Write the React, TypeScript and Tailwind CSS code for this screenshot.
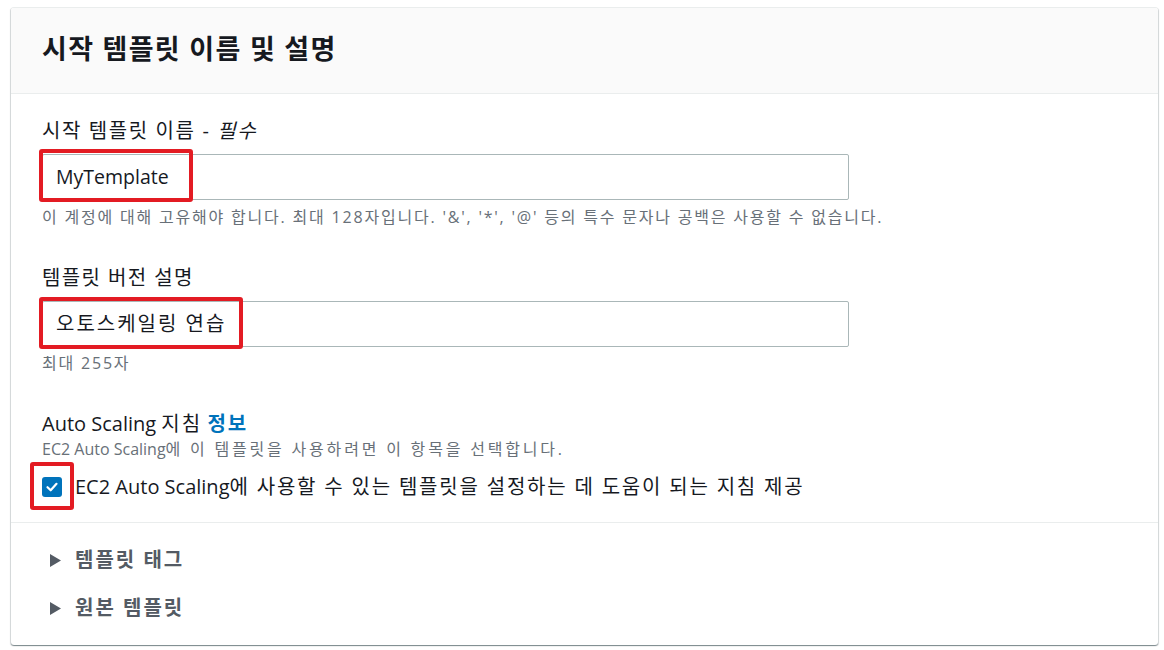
import React from "react";

const font = { fontFamily: '"Open Sans", "Noto Sans CJK KR", sans-serif' };

function RedBox({ className }: { className: string }) {
  return <div className={"pointer-events-none absolute rounded-[3px] border-[4px] border-[#e31b23] " + className} />;
}

export default function App() {
  return (
    <div className="h-[650px] w-[1164px] bg-white pt-[7px] pl-[11px]" style={font}>
      <div className="w-[1147px] h-[638px] rounded-[3px] bg-white shadow-[0_1px_1px_0_rgba(0,28,36,0.35),1px_1px_1px_0_rgba(0,28,36,0.15),-1px_1px_1px_0_rgba(0,28,36,0.15)] border-t border-[#eaeded] flex flex-col">
        <div className="h-[86px] bg-[#fafafa] border-b border-[#eaeded] flex items-center pl-[31px] pb-[5px] rounded-t-[3px]">
          <h2 className="text-[27px] font-bold text-[#16191f] leading-none tracking-[1.3px]">시작 템플릿 이름 및 설명</h2>
        </div>
        <div className="pl-[31px] pt-[24px] pb-[17px] border-b border-[#eaeded]">
          <div className="text-[20px] text-[#16191f] leading-[26px] tracking-[1.6px]">
            시작 템플릿 이름 - <i>필수</i>
          </div>
          <div className="relative mt-[10px] w-[807px]">
            <div className="h-[46px] border border-[#aab7b8] rounded-[2px] flex items-center pl-[13px] text-[19.5px] text-[#16191f]">
              MyTemplate
            </div>
            <RedBox className="left-[-3px] top-[-5px] w-[154px] h-[53px]" />
          </div>
          <div className="mt-[7px] text-[16px] text-[#687078] leading-[20px] tracking-[1.8px]">
            이 계정에 대해 고유해야 합니다. 최대 128자입니다. '&amp;', '*', '@' 등의 특수 문자나 공백은 사용할 수 없습니다.
          </div>

          <div className="mt-[38px] text-[20px] text-[#16191f] leading-[26px] tracking-[1.4px]">템플릿 버전 설명</div>
          <div className="relative mt-[10px] w-[807px]">
            <div className="h-[46px] border border-[#aab7b8] rounded-[2px] flex items-center pl-[13px] text-[20px] tracking-[2px] text-[#16191f]">
              오토스케일링 연습
            </div>
            <RedBox className="left-[-3px] top-[-4px] w-[204px] h-[52px]" />
          </div>
          <div className="mt-[6px] text-[16px] text-[#687078] leading-[20px] tracking-[1.8px]">최대 255자</div>

          <div className="mt-[38px] text-[20px] text-[#16191f] leading-[26px]">
            Auto Scaling <span className="tracking-[2px]">지침</span>{" "}
            <span className="tracking-[2px] font-bold text-[#0073bb]">정보</span>
          </div>
          <div className="mt-[2px] text-[16px] text-[#687078] leading-[20px]">
            EC2 Auto Scaling<span className="tracking-[2.8px]">에 이 템플릿을 사용하려면 이 항목을 선택합니다.</span>
          </div>
          <div className="relative mt-[10px] flex items-center gap-[13px] h-[36px]">
            <div className="w-[20px] h-[20px] rounded-[3px] bg-[#0073bb] flex items-center justify-center">
              <svg width="14" height="14" viewBox="0 0 14 14" fill="none">
                <path d="M2.5 7.2 L5.7 10.3 L11.5 3.8" stroke="white" strokeWidth="2.2" strokeLinecap="round" strokeLinejoin="round" />
              </svg>
            </div>
            <span className="text-[20px] text-[#16191f]">
              EC2 Auto Scaling<span className="tracking-[1.8px]">에 사용할 수 있는 템플릿을 설정하는 데 도움이 되는 지침 제공</span>
            </span>
            <RedBox className="left-[-12px] top-[-7px] w-[44px] h-[48px]" />
          </div>
        </div>
        <div className="pl-[39px] pt-[24px] flex flex-col gap-[22px]">
          {["템플릿 태그", "원본 템플릿"].map((t) => (
            <div key={t} className="flex items-center gap-[14px] h-[26px]">
              <svg width="11" height="13" viewBox="0 0 11 13">
                <path d="M0 0 L11 6.5 L0 13 Z" fill="#545b64" />
              </svg>
              <span className="text-[20px] font-bold text-[#545b64] tracking-[2px]">{t}</span>
            </div>
          ))}
        </div>
      </div>
    </div>
  );
}
